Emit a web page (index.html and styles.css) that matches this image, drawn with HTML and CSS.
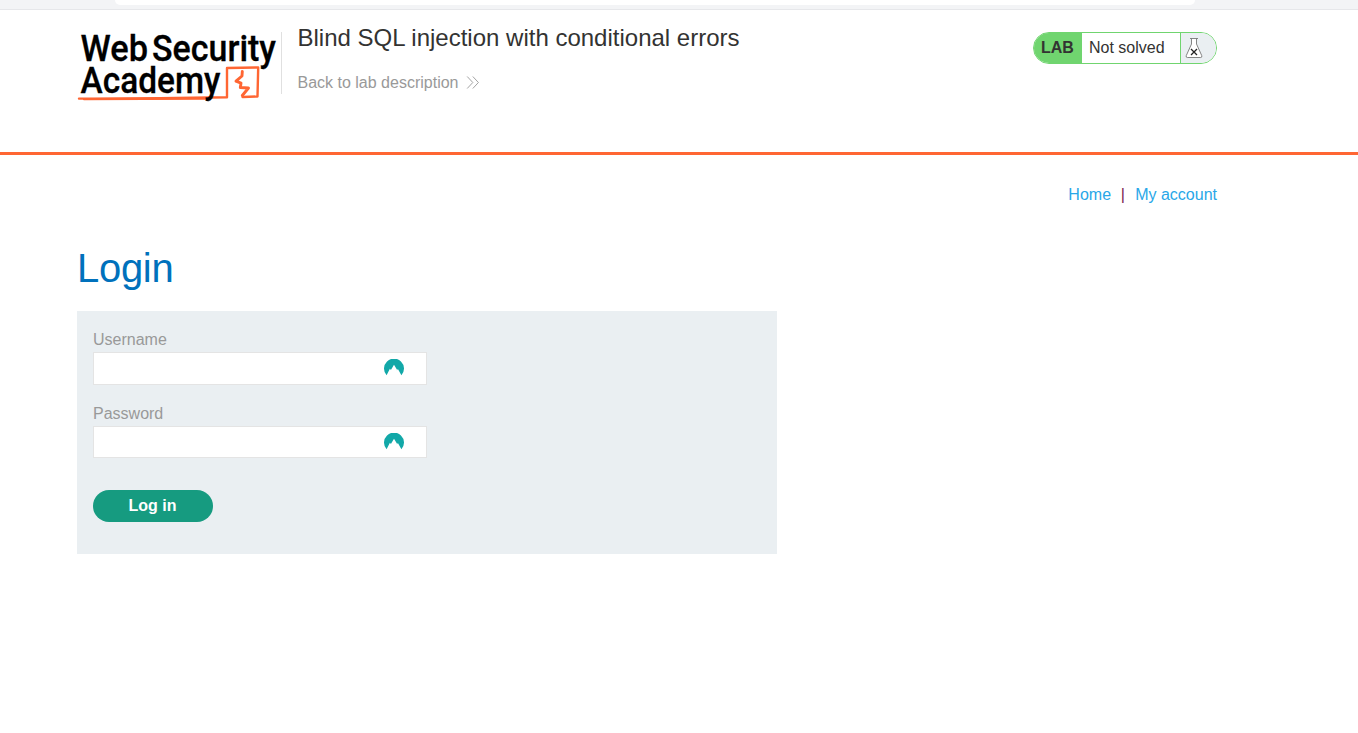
FILE: index.html
```
<!DOCTYPE html>
<html lang="en">
<head>
<meta charset="utf-8">
<title>Blind SQL injection with conditional errors</title>
<link rel="stylesheet" href="styles.css">
</head>
<body>
<div class="browser-edge"><div class="address-edge"></div></div>
<header class="lab-header">
  <div class="container header-row">
    <svg class="logo" width="204" height="74" viewBox="77 30 204 74" role="img" aria-label="Web Security Academy">
      <g fill="none" stroke="#ff6633" stroke-linejoin="round" stroke-linecap="round">
        <path d="M79 98.6 Q150 98.8 227 97.2 L227 68 L258.200 67.500 L257.500 96.500 L242.500 97" stroke-width="2.400"/>
        <path d="M84 99.200 L205 98.600" stroke-width="2.200"/>
        <path d="M242.300 71.500 L242 76 L236 81.200 L241 83.200 L240.300 87.500 L248.500 88 L242.300 95.500" stroke-width="2.900"/>
      </g>
      <g class="logo-text">
        <text x="80.5" y="60.7" textLength="67.5" lengthAdjust="spacingAndGlyphs">Web</text>
        <text x="152" y="60.7" textLength="124" lengthAdjust="spacingAndGlyphs">Security</text>
        <text x="80.5" y="93.3" textLength="140" lengthAdjust="spacingAndGlyphs">Academy</text>
      </g>
    </svg>
    <div class="title-block">
      <h2>Blind SQL injection with conditional errors</h2>
      <a class="back-link">Back to lab description
        <svg width="14" height="14" viewBox="0 0 14 14" fill="none" stroke="#999" stroke-width=".9"><path d="M1.2 .5 6.8 6.500 1.2 12.500M6.8 .5 12.4 6.500 6.8 12.500"/></svg>
      </a>
    </div>
    <div class="lab-status">
      <span class="lab-tag">LAB</span>
      <span class="lab-state">Not solved</span>
      <span class="lab-icon">
        <svg width="18" height="22" viewBox="0 0 18 22" fill="none"><path d="M5 1.500H13M6.500 1.500V7L1.300 18.500Q.600 20.500 2.300 20.500H15.700Q17.400 20.500 16.700 18.500L11.500 7V1.500" fill="#fff" stroke="#777" stroke-width=".9"/><path d="M6 12 12 18M12 12 6 18" stroke="#222" stroke-width="1.300"/></svg>
      </span>
    </div>
  </div>
</header>
<main class="container">
  <nav class="account-nav"><a>Home</a><span class="divider">|</span><a>My account</a></nav>
  <h1>Login</h1>
  <form class="login-form">
    <label for="user">Username</label>
    <div class="field">
      <input id="user" type="text">
      <svg class="pass-icon" width="20" height="17" viewBox="0 0 20 17"><path fill="#12a8a8" d="M2.600 16.300A10 10 0 1 1 17.400 16.300L13.900 10 12.800 11.500 13 10.700 10 5.700 6.900 10.900 5.900 9.700Z"/></svg>
    </div>
    <label for="pass">Password</label>
    <div class="field field-password">
      <input id="pass" type="password">
      <svg class="pass-icon" width="20" height="17" viewBox="0 0 20 17"><path fill="#12a8a8" d="M2.600 16.300A10 10 0 1 1 17.400 16.300L13.900 10 12.800 11.500 13 10.700 10 5.700 6.900 10.900 5.900 9.700Z"/></svg>
    </div>
    <button type="button">Log in</button>
  </form>
</main>
</body>
</html>
```
FILE: styles.css
```
* { box-sizing: border-box; }
body {
  margin: 0;
  background: #fff;
  color: #333332;
  font: 16px/18px "Liberation Sans", Arial, sans-serif;
  overflow: hidden;
}
.browser-edge {
  height: 10px;
  background: #f3f4f6;
  border-bottom: 1px solid #e6e7ea;
}
.address-edge {
  height: 5px;
  margin: 0 163px 0 115px;
  background: #fff;
  border-radius: 0 0 8px 8px;
}
.container {
  width: 1140px;
  margin-left: 77px;
}
.lab-header {
  height: 145px;
  border-bottom: 3px solid #ff6633;
}
.header-row {
  display: flex;
  align-items: flex-start;
  padding-top: 20px;
}
.logo { display: block; flex: none; overflow: visible; }
.logo-text {
  fill: #000;
  stroke: #000;
  stroke-width: 0.3px;
  font-family: Roboto, sans-serif;
  font-size: 37.8px;
  font-weight: 500;
}
.title-block {
  height: 62px;
  margin-top: 2px;
  padding-left: 15.5px;
  border-left: 1px solid #e0e0e0;
}
.title-block h2 {
  margin: -8px 0 0;
  font-size: 24px;
  line-height: 28px;
  font-weight: 400;
  white-space: nowrap;
}
.back-link {
  display: flex;
  align-items: center;
  gap: 8px;
  margin-top: 22px;
  color: #999;
}
.lab-status {
  display: flex;
  width: 184px;
  height: 32px;
  margin: 2px 0 0 auto;
  overflow: hidden;
  border: 1px solid #70d56f;
  border-radius: 16px;
  line-height: 30px;
}
.lab-tag {
  width: 48px;
  padding-left: 7px;
  background: #70d56f;
  font-weight: 700;
}
.lab-state {
  width: 99px;
  padding-left: 7px;
  border-right: 1px solid #70d56f;
}
.lab-icon {
  display: flex;
  flex: 1;
  align-items: center;
  padding-left: 4px;
  background: #eaeff2;
}
.account-nav {
  display: flex;
  justify-content: flex-end;
  gap: 10px;
  padding-top: 31px;
}
.account-nav a { color: #29a7e8; }
.divider {
  color: #7a1a50;
  transform: translateX(-0.4px);
}
h1 {
  margin: 40px 0 0;
  color: #0071bc;
  font-size: 40px;
  line-height: 48px;
  font-weight: 400;
  letter-spacing: -0.3px;
}
.login-form {
  width: 700px;
  height: 243px;
  margin-top: 19px;
  padding: 20px 16px 32px;
  background: #eaeff2;
}
label { display: block; color: #999; }
.field {
  position: relative;
  width: 334px;
  margin: 3px 0 20px;
}
.field input {
  display: block;
  width: 100%;
  height: 33px;
  padding: 0 8px;
  border: 1px solid #e4e4e4;
  background: #fff;
}
.field-password input { height: 32px; }
.pass-icon {
  position: absolute;
  top: 7px;
  left: 291px;
}
button {
  display: block;
  width: 120px;
  height: 32px;
  margin-top: 32px;
  padding: 0 1px 0 0;
  border: 0;
  border-radius: 16px;
  background: #169b80;
  color: #fff;
  font: 700 16px/32px "Liberation Sans", Arial, sans-serif;
}
```
